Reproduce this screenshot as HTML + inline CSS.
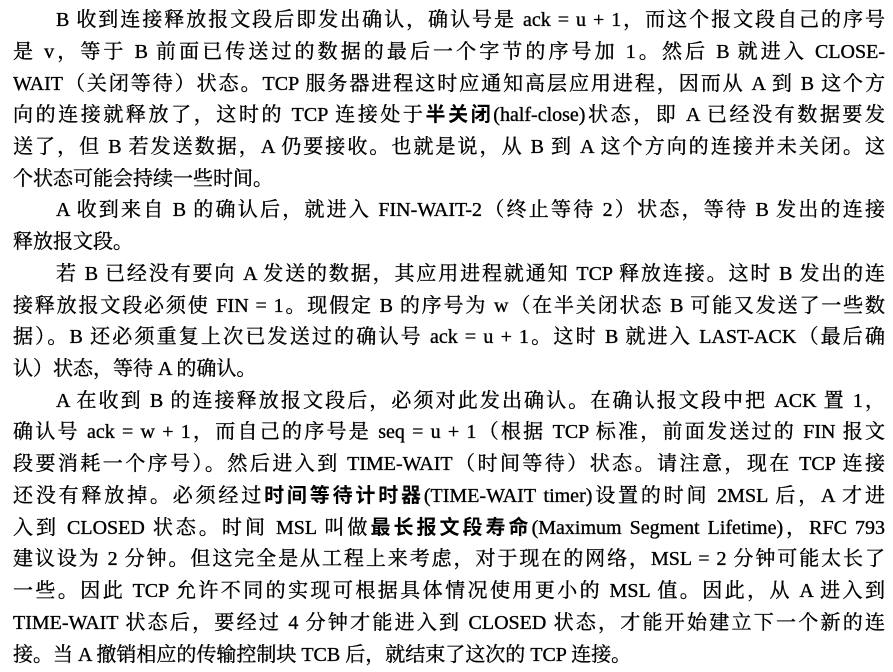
<!DOCTYPE html>
<html><head><meta charset="utf-8"><style>
html,body{margin:0;padding:0;background:#fff;}
body{width:893px;height:672px;overflow:hidden;position:relative;font-family:"Liberation Serif","Noto Serif CJK SC",serif;font-size:20px;color:#000;-webkit-text-stroke:0.35px #000;}
.l{position:absolute;left:13px;width:872px;height:32px;line-height:32px;text-align:justify;text-align-last:justify;overflow:hidden;white-space:normal;}
.i{left:56px;width:829px;}
.e{text-align-last:left;}
b{font-family:"Liberation Serif","Noto Sans CJK SC",serif;font-weight:bold;-webkit-text-stroke:0;}
</style></head><body>
<div class="l i" style="top:4px">B 收到连接释放报文段后即发出确认，确认号是 ack = u + 1，而这个报文段自己的序号</div>
<div class="l" style="top:36px">是 v，等于 B 前面已传送过的数据的最后一个字节的序号加 1。然后 B 就进入 CLOSE-</div>
<div class="l" style="top:68px">WAIT（关闭等待）状态。TCP 服务器进程这时应通知高层应用进程，因而从 A 到 B 这个方</div>
<div class="l" style="top:99px">向的连接就释放了，这时的 TCP 连接处于<b>半关闭</b>(half-close)状态，即 A 已经没有数据要发</div>
<div class="l" style="top:131px">送了，但 B 若发送数据，A 仍要接收。也就是说，从 B 到 A 这个方向的连接并未关闭。这</div>
<div class="l e" style="top:163px">个状态可能会持续一些时间。</div>
<div class="l i" style="top:194px">A 收到来自 B 的确认后，就进入 FIN-WAIT-2（终止等待 2）状态，等待 B 发出的连接</div>
<div class="l e" style="top:226px">释放报文段。</div>
<div class="l i" style="top:258px">若 B 已经没有要向 A 发送的数据，其应用进程就通知 TCP 释放连接。这时 B 发出的连</div>
<div class="l" style="top:290px">接释放报文段必须使 FIN = 1。现假定 B 的序号为 w（在半关闭状态 B 可能又发送了一些数</div>
<div class="l" style="top:321px">据）。B 还必须重复上次已发送过的确认号 ack = u + 1。这时 B 就进入 LAST-ACK（最后确</div>
<div class="l e" style="top:353px">认）状态，等待 A 的确认。</div>
<div class="l i" style="top:385px">A 在收到 B 的连接释放报文段后，必须对此发出确认。在确认报文段中把 ACK 置 1，</div>
<div class="l" style="top:416px">确认号 ack = w + 1，而自己的序号是 seq = u + 1（根据 TCP 标准，前面发送过的 FIN 报文</div>
<div class="l" style="top:448px">段要消耗一个序号）。然后进入到 TIME-WAIT（时间等待）状态。请注意，现在 TCP 连接</div>
<div class="l" style="top:480px">还没有释放掉。必须经过<b>时间等待计时器</b>(TIME-WAIT timer)设置的时间 2MSL 后，A 才进</div>
<div class="l" style="top:512px">入到 CLOSED 状态。时间 MSL 叫做<b>最长报文段寿命</b>(Maximum Segment Lifetime)，RFC 793</div>
<div class="l" style="top:543px">建议设为 2 分钟。但这完全是从工程上来考虑，对于现在的网络，MSL = 2 分钟可能太长了</div>
<div class="l" style="top:575px">一些。因此 TCP 允许不同的实现可根据具体情况使用更小的 MSL 值。因此，从 A 进入到</div>
<div class="l" style="top:607px">TIME-WAIT 状态后，要经过 4 分钟才能进入到 CLOSED 状态，才能开始建立下一个新的连</div>
<div class="l e" style="top:639px">接。当 A 撤销相应的传输控制块 TCB 后，就结束了这次的 TCP 连接。</div>
</body></html>
